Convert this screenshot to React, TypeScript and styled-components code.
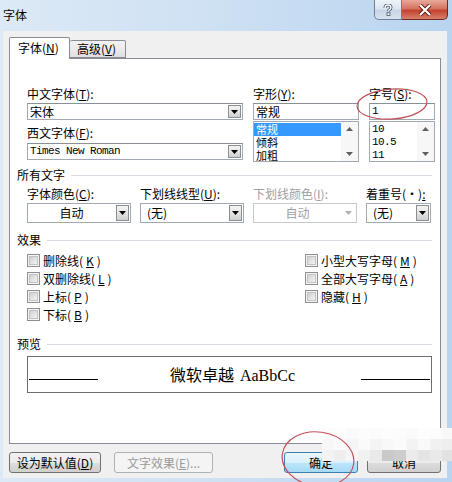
import styled, { createGlobalStyle } from "styled-components";

const GlobalStyle = createGlobalStyle`
  body {
    margin: 0;
    font-family: "Noto Sans CJK SC", "Liberation Sans", sans-serif;
    font-size: 12px;
    color: #000;
  }
  u {
    text-decoration-thickness: 1px;
    text-underline-offset: 1px;
  }
`;

const Window = styled.div`
  position: relative;
  width: 452px;
  height: 482px;
  overflow: hidden;
  display: flex;
  flex-direction: column;
  background: linear-gradient(90deg, #dce9f6 0%, #cfe1f3 45%, #b9d4ef 100%);
`;

const TitleBar = styled.div`
  height: 31px;
  flex: none;
  display: flex;
  align-items: flex-start;
  justify-content: space-between;
  padding: 0 4px 0 3px;
`;

const Title = styled.div`
  padding-top: 8px;
  line-height: 14px;
`;

const CaptionButtons = styled.div`
  display: flex;
`;

const CaptionButton = styled.div<{ $close?: boolean }>`
  width: ${p => (p.$close ? 46 : 28)}px;
  height: 20px;
  box-sizing: border-box;
  display: flex;
  align-items: center;
  justify-content: center;
  border: 1px solid ${p => (p.$close ? "#6b2a22" : "#6f7f93")};
  border-top: none;
  ${p => (p.$close ? "border-left: none;" : "")}
  border-radius: ${p => (p.$close ? "0 0 5px 0" : "0 0 0 5px")};
  background: ${p =>
    p.$close
      ? "linear-gradient(180deg, #e8a99a 0%, #d6735f 45%, #c3432f 55%, #d9806a 100%)"
      : "linear-gradient(180deg, #eef3f9 0%, #dde6f1 45%, #c8d5e5 55%, #d8e2ee 100%)"};
`;

const Body = styled.div`
  flex: 1;
  margin: 0 5px 4px 3px;
  background: #f0f0f0;
  padding: 6px 6px 0 6px;
  display: flex;
  flex-direction: column;
`;

const TabStrip = styled.div`
  display: flex;
  align-items: flex-end;
  height: 21px;
  position: relative;
  z-index: 1;
`;

const Tab = styled.div<{ $active?: boolean }>`
  box-sizing: border-box;
  height: ${p => (p.$active ? 22 : 18)}px;
  width: ${p => (p.$active ? 61 : 56)}px;
  padding-left: ${p => (p.$active ? 8 : 7)}px;
  line-height: ${p => (p.$active ? 19 : 16)}px;
  border: 1px solid #898c95;
  border-bottom: ${p => (p.$active ? "none" : "1px solid #898c95")};
  ${p => (p.$active ? "" : "border-left: none;")}
  margin-bottom: ${p => (p.$active ? -1 : 0)}px;
  background: ${p =>
    p.$active ? "#fff" : "linear-gradient(180deg, #f3f3f3 0%, #ebebeb 50%, #dedede 100%)"};
  border-radius: 2px 2px 0 0;
`;

const Panel = styled.div`
  height: 386px;
  box-sizing: border-box;
  border: 1px solid #898c95;
  background: #fff;
  padding: 0 8px 0 7px;
  display: flex;
  flex-direction: column;
`;

const FontGrid = styled.div`
  margin: 28px 0 0 10px;
  display: grid;
  grid-template-columns: 216px 106px 66px;
  column-gap: 10px;
  justify-content: space-between;
`;

const Column = styled.div`
  display: flex;
  flex-direction: column;
`;

const Label = styled.div<{ $disabled?: boolean; $gap?: number }>`
  line-height: 14px;
  height: 14px;
  white-space: nowrap;
  margin-top: ${p => p.$gap ?? 0}px;
  color: ${p => (p.$disabled ? "#a0a0a0" : "#000")};
`;

const Field = styled.div<{ $gap?: number }>`
  box-sizing: border-box;
  height: 17px;
  margin-top: ${p => p.$gap ?? 2}px;
  border: 1px solid #a3a9b1;
  border-top-color: #8b9097;
  background: #fff;
  display: flex;
  align-items: center;
`;

const FieldText = styled.div<{ $mono?: boolean }>`
  flex: 1;
  padding-left: 2px;
  line-height: 15px;
  white-space: nowrap;
  ${p =>
    p.$mono
      ? `font-family: "Liberation Mono", monospace; font-size: 11px; letter-spacing: -0.6px;`
      : ""}
`;

const ArrowButton = styled.div<{ $disabled?: boolean }>`
  width: 13px;
  align-self: stretch;
  margin: 1px;
  box-sizing: border-box;
  display: flex;
  align-items: center;
  justify-content: center;
  border: 1px solid ${p => (p.$disabled ? "transparent" : "#8a8d92")};
  background: ${p =>
    p.$disabled ? "transparent" : "linear-gradient(180deg, #f4f4f4 0%, #e4e4e4 50%, #cfcfcf 100%)"};
`;

const ListBox = styled.div`
  box-sizing: border-box;
  height: 41px;
  margin-top: 1px;
  border: 1px solid #a3a9b1;
  display: flex;
  background: #fff;
`;

const ListItems = styled.div<{ $mono?: boolean }>`
  flex: 1;
  padding-top: 1px;
  font-size: 11px;
  ${p =>
    p.$mono
      ? `font-family: "Liberation Mono", monospace; letter-spacing: -0.6px;`
      : ""}
`;

const ListItem = styled.div<{ $selected?: boolean }>`
  height: 13px;
  line-height: 13px;
  padding-left: 2px;
  color: ${p => (p.$selected ? "#fff" : "#000")};
  background: ${p => (p.$selected ? "#3399ff" : "transparent")};
`;

const ScrollBar = styled.div`
  width: 17px;
  display: flex;
  flex-direction: column;
  justify-content: space-between;
  align-items: center;
  padding: 5px 0 5px;
  background: #f7f7f7;
`;

const SectionHeader = styled.div<{ $gap: number }>`
  margin-top: ${p => p.$gap}px;
  display: flex;
  align-items: center;
  line-height: 14px;
  &::after {
    content: "";
    flex: 1;
    height: 1px;
    margin-left: 6px;
    background: #d8dde3;
  }
`;

const ComboGrid = styled.div`
  margin: 5px 0 0 10px;
  display: grid;
  grid-template-columns: 104px 104px 104px 65px;
  column-gap: 9px;
  row-gap: 2px;
`;

const Combo = styled.div<{ $disabled?: boolean }>`
  box-sizing: border-box;
  height: 20px;
  border: 1px solid ${p => (p.$disabled ? "#c9c9c9" : "#a3a9b1")};
  display: flex;
  background: #fff;
`;

const ComboText = styled.div<{ $center?: boolean; $disabled?: boolean }>`
  flex: 1;
  line-height: 18px;
  padding-left: ${p => (p.$center ? 0 : 6)}px;
  text-align: ${p => (p.$center ? "center" : "left")};
  color: ${p => (p.$disabled ? "#a0a0a0" : "#000")};
`;

const Effects = styled.div`
  margin: 4px 0 0 10px;
  display: flex;
`;

const EffectColumn = styled.div<{ $width?: number }>`
  width: ${p => (p.$width ? `${p.$width}px` : "auto")};
  display: flex;
  flex-direction: column;
`;

const CheckRow = styled.div`
  height: 18px;
  display: flex;
  align-items: center;
  gap: 3px;
  white-space: nowrap;
`;

const CheckBox = styled.div`
  width: 13px;
  height: 13px;
  box-sizing: border-box;
  border: 1px solid #8e8f8f;
  padding: 1px;
  background: #f4f4f4;
  &::before {
    content: "";
    display: block;
    width: 100%;
    height: 100%;
    box-sizing: border-box;
    border: 1px solid #c2c2c2;
    background: linear-gradient(135deg, #cfcfcf 0%, #e6e6e6 60%, #f2f2f2 100%);
  }
`;

const Preview = styled.div`
  margin: 5px 0 0 10px;
  height: 37px;
  box-sizing: border-box;
  border: 1px solid #6d6d6d;
  display: flex;
  align-items: center;
  padding: 0 1px;
`;

const PreviewLine = styled.div`
  width: 69px;
  height: 1px;
  margin-top: 10px;
  background: #000;
`;

const PreviewText = styled.div`
  flex: 1;
  text-align: center;
  font-size: 16px;
  line-height: 20px;
  padding-left: 6px;
  span {
    font-family: "Liberation Serif", serif;
    margin-left: 6px;
  }
`;

const ButtonRow = styled.div`
  margin-top: 8px;
  display: flex;
  gap: 13px;
`;

const Button = styled.div<{ $width: number; $default?: boolean; $disabled?: boolean }>`
  width: ${p => p.$width}px;
  height: 21px;
  box-sizing: border-box;
  border-radius: 3px;
  text-align: center;
  line-height: 19px;
  white-space: nowrap;
  border: 1px solid ${p => (p.$disabled ? "#adb2b5" : p.$default ? "#3c7fb1" : "#707070")};
  color: ${p => (p.$disabled ? "#9a9a9a" : "#000")};
  background: ${p =>
    p.$disabled
      ? "#f4f4f4"
      : p.$default
      ? "linear-gradient(180deg, #eaf6fd 0%, #d9f0fc 50%, #bee6fd 51%, #a7d9f5 100%)"
      : "linear-gradient(180deg, #f2f2f2 0%, #ebebeb 50%, #dddddd 51%, #cfcfcf 100%)"};
  &:nth-child(3) {
    margin-left: auto;
    margin-right: -4px;
  }
`;

const Marks = styled.svg`
  position: absolute;
  left: 0;
  top: 0;
  pointer-events: none;
`;

const Watermark = styled.div`
  position: absolute;
  left: 322px;
  top: 428px;
  display: grid;
  grid-template-columns: repeat(11, 12px);
  grid-auto-rows: 11px;
`;

const Block = styled.div<{ $c: string }>`
  background: ${p => p.$c};
`;

const Arrow = ({ color = "#000" }: { color?: string }) => (
  <svg width="7" height="4" viewBox="0 0 7 4">
    <polygon points="0,0 7,0 3.5,4" fill={color} />
  </svg>
);

const Scroll = () => (
  <ScrollBar>
    <svg width="7" height="4" viewBox="0 0 7 4">
      <polygon points="0,4 7,4 3.5,0" fill="#606060" />
    </svg>
    <svg width="7" height="4" viewBox="0 0 7 4">
      <polygon points="0,0 7,0 3.5,4" fill="#606060" />
    </svg>
  </ScrollBar>
);

const watermark = [
  "#fbfbfb #fdfdfd #fafafa #fcfcfc #fbfbfb #fdfdfd #fcfcfc #fafafa #fdfdfd #fcfcfc #f8f8f8",
  "#f7f7f7 #fbfbfb #f5f5f5 #fafafa #f4f4f4 #f8f8f8 #fbfbfb #f3f3f3 #f9f9f9 #f1f1f1 #eeeeee",
  "#f3f3f3 #eeeeee #f6f6f6 #f1f1f1 #e9e9e9 #c9c9c9 #cdcdcd #ebebeb #e4e4e4 #e9e9e9 #e2e2e2",
].flatMap(r => r.split(" "));

function App() {
  return (
    <Window>
      <GlobalStyle />
      <TitleBar>
        <Title>字体</Title>
        <CaptionButtons>
          <CaptionButton>
            <svg width="10" height="12" viewBox="0 0 10 12">
              <path d="M2 4 Q2 1 5 1 Q8 1 8 3.5 Q8 5 6 6 L5.5 7.5" fill="none" stroke="#40506a" strokeWidth="3" />
              <path d="M2 4 Q2 1 5 1 Q8 1 8 3.5 Q8 5 6 6 L5.5 7.5" fill="none" stroke="#fff" strokeWidth="1.4" />
              <rect x="4" y="8.8" width="3" height="2.6" fill="#fff" stroke="#40506a" strokeWidth="0.8" />
            </svg>
          </CaptionButton>
          <CaptionButton $close>
            <svg width="14" height="12" viewBox="0 0 14 12">
              <path d="M2 1 L12 11 M12 1 L2 11" stroke="#5a1a12" strokeWidth="4" />
              <path d="M2 1 L12 11 M12 1 L2 11" stroke="#fff" strokeWidth="2.2" />
            </svg>
          </CaptionButton>
        </CaptionButtons>
      </TitleBar>

      <Body>
        <TabStrip>
          <Tab $active>字体(<u>N</u>)</Tab>
          <Tab>高级(<u>V</u>)</Tab>
        </TabStrip>
        <Panel>
          <FontGrid>
            <Column>
              <Label>中文字体(<u>T</u>):</Label>
              <Field>
                <FieldText>宋体</FieldText>
                <ArrowButton><Arrow /></ArrowButton>
              </Field>
              <Label $gap={6}>西文字体(<u>F</u>):</Label>
              <Field $gap={3}>
                <FieldText $mono>Times New Roman</FieldText>
                <ArrowButton><Arrow /></ArrowButton>
              </Field>
            </Column>
            <Column>
              <Label>字形(<u>Y</u>):</Label>
              <Field>
                <FieldText>常规</FieldText>
              </Field>
              <ListBox>
                <ListItems>
                  <ListItem $selected>常规</ListItem>
                  <ListItem>倾斜</ListItem>
                  <ListItem>加粗</ListItem>
                </ListItems>
                <Scroll />
              </ListBox>
            </Column>
            <Column>
              <Label>字号(<u>S</u>):</Label>
              <Field>
                <FieldText $mono>1</FieldText>
              </Field>
              <ListBox>
                <ListItems $mono>
                  <ListItem>10</ListItem>
                  <ListItem>10.5</ListItem>
                  <ListItem>11</ListItem>
                </ListItems>
                <Scroll />
              </ListBox>
            </Column>
          </FontGrid>

          <SectionHeader $gap={6}>所有文字</SectionHeader>
          <ComboGrid>
            <Label>字体颜色(<u>C</u>):</Label>
            <Label>下划线线型(<u>U</u>):</Label>
            <Label $disabled>下划线颜色(<u>I</u>):</Label>
            <Label>着重号(·)<u>:</u></Label>
            <Combo>
              <ComboText $center>自动</ComboText>
              <ArrowButton><Arrow /></ArrowButton>
            </Combo>
            <Combo>
              <ComboText>(无)</ComboText>
              <ArrowButton><Arrow /></ArrowButton>
            </Combo>
            <Combo $disabled>
              <ComboText $center $disabled>自动</ComboText>
              <ArrowButton $disabled><Arrow color="#b0b0b0" /></ArrowButton>
            </Combo>
            <Combo>
              <ComboText>(无)</ComboText>
              <ArrowButton><Arrow /></ArrowButton>
            </Combo>
          </ComboGrid>

          <SectionHeader $gap={10}>效果</SectionHeader>
          <Effects>
            <EffectColumn $width={278}>
              <CheckRow><CheckBox />删除线(<u>K</u>)</CheckRow>
              <CheckRow><CheckBox />双删除线(<u>L</u>)</CheckRow>
              <CheckRow><CheckBox />上标(<u>P</u>)</CheckRow>
              <CheckRow><CheckBox />下标(<u>B</u>)</CheckRow>
            </EffectColumn>
            <EffectColumn>
              <CheckRow><CheckBox />小型大写字母(<u>M</u>)</CheckRow>
              <CheckRow><CheckBox />全部大写字母(<u>A</u>)</CheckRow>
              <CheckRow><CheckBox />隐藏(<u>H</u>)</CheckRow>
            </EffectColumn>
          </Effects>

          <SectionHeader $gap={14}>预览</SectionHeader>
          <Preview>
            <PreviewLine />
            <PreviewText>微软卓越<span>AaBbCc</span></PreviewText>
            <PreviewLine />
          </Preview>
        </Panel>

        <ButtonRow>
          <Button $width={92}>设为默认值(<u>D</u>)</Button>
          <Button $width={99} $disabled>文字效果(<u>E</u>)...</Button>
          <Button $width={74} $default>确定</Button>
          <Button $width={74}>取消</Button>
        </ButtonRow>
      </Body>

      <Watermark>
        {watermark.map((c, i) => (
          <Block key={i} $c={c} />
        ))}
      </Watermark>

      <Marks width="452" height="482" viewBox="0 0 452 482">
        <ellipse cx="392" cy="104" rx="35" ry="15" transform="rotate(-4 392 104)" fill="none" stroke="#c2505a" strokeWidth="1.2" />
        <ellipse cx="318" cy="459" rx="36" ry="27" transform="rotate(8 318 459)" fill="none" stroke="#c2505a" strokeWidth="1.2" />
      </Marks>
    </Window>
  );
}

export default App;
